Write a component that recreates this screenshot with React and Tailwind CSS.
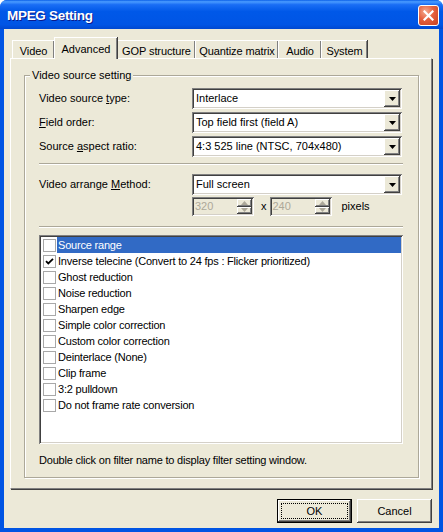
import React from 'react';

const sunken =
  'shadow-[inset_1px_1px_0_#808080,inset_-1px_-1px_0_#ffffff,inset_2px_2px_0_#404040,inset_-2px_-2px_0_#d4d0c8]';
const raised =
  'shadow-[inset_-1px_-1px_0_#404040,inset_1px_1px_0_#ffffff,inset_-2px_-2px_0_#808080,inset_2px_2px_0_#ece9d8]';

const tabs = [
  { name: 'Video', w: 'w-[42px]' },
  { name: 'Advanced', w: 'w-[63px]', active: true },
  { name: 'GOP structure', w: 'w-[78px]' },
  { name: 'Quantize matrix', w: 'w-[83px]' },
  { name: 'Audio', w: 'w-[43px]' },
  { name: 'System', w: 'w-[46px]' },
];

const filters = [
  { label: 'Source range', selected: true },
  { label: 'Inverse telecine (Convert to 24 fps : Flicker prioritized)', checked: true },
  { label: 'Ghost reduction' },
  { label: 'Noise reduction' },
  { label: 'Sharpen edge' },
  { label: 'Simple color correction' },
  { label: 'Custom color correction' },
  { label: 'Deinterlace (None)' },
  { label: 'Clip frame' },
  { label: '3:2 pulldown' },
  { label: 'Do not frame rate conversion' },
];

function Combo({ value }) {
  return (
    <div className={`flex h-[21px] w-[210px] items-center bg-white p-[2px] ${sunken}`}>
      <span className="flex-1 truncate pl-[2px] leading-[17px]">{value}</span>
      <span className={`flex h-[17px] w-[16px] items-center justify-center bg-[#ece9d8] ${raised}`}>
        <svg width="7" height="4" viewBox="0 0 7 4">
          <path d="M0 0h7L3.5 4z" fill="#000" />
        </svg>
      </span>
    </div>
  );
}

function Spin({ value }) {
  return (
    <div className={`flex h-[19px] w-[62px] items-center bg-[#ece9d8] p-[2px] ${sunken}`}>
      <span className="flex-1 pl-[1px] leading-[15px] text-[#aca899]">{value}</span>
      <span className="flex h-[15px] w-[15px] flex-col">
        {['M0 4L3.5 0 7 4z', 'M0 0h7L3.5 4z'].map((d) => (
          <span key={d} className={`flex flex-1 items-center justify-center bg-[#ece9d8] ${raised}`}>
            <svg width="7" height="4" viewBox="0 0 7 4">
              <path d={d} fill="#aca899" />
            </svg>
          </span>
        ))}
      </span>
    </div>
  );
}

function Row({ label, children }) {
  return (
    <div className="flex h-[21px] items-center">
      <span className="w-[153px]">{label}</span>
      {children}
    </div>
  );
}

function Separator({ className }) {
  return <div className={`h-[2px] border-t border-b border-t-[#aca899] border-b-white ${className}`} />;
}

export default function App() {
  return (
    <div className="flex h-[532px] w-[443px] flex-col overflow-hidden rounded-t-[7px] bg-[#0054e3] font-['Liberation_Sans',Arial,sans-serif] text-[11px] text-black">
      {/* title bar */}
      <div className="flex h-[29px] items-start bg-[linear-gradient(to_bottom,#0a5fe8_0%,#4a9bff_6%,#1a6ef5_16%,#0058e8_40%,#0055e5_85%,#0048d0_100%)] pl-[7px] pr-[4px]">
        <span className="mt-[7px] flex-1 text-[13.5px] font-bold leading-[17px] tracking-[-0.3px] text-white [text-shadow:1px_1px_0_#0a1a8c]">
          MPEG Setting
        </span>
        <span className="mt-[5px] flex h-[21px] w-[21px] items-center justify-center rounded-[3px] border border-white bg-[radial-gradient(circle_at_35%_30%,#f5ab90_0%,#e5603e_45%,#c9401f_100%)]">
          <svg width="11" height="11" viewBox="0 0 11 11">
            <path d="M1.5 1.5l8 8M9.5 1.5l-8 8" stroke="#fff" strokeWidth="2.2" strokeLinecap="square" />
          </svg>
        </span>
      </div>

      {/* client area */}
      <div className="mx-[4px] mb-[4px] flex flex-1 flex-col bg-[#ece9d8] pl-[6px] pr-[7px]">
        <div className="mt-[8px] flex h-[21px] items-end pl-[2px]">
          {tabs.map((t) =>
            t.active ? (
              <div
                key={t.name}
                className={`relative z-10 -mb-[1px] flex h-[22px] ${t.w} items-start justify-center border-l border-t border-l-white border-t-white bg-[#ece9d8] pt-[3px] shadow-[inset_-1px_0_0_#808080,1px_0_0_#404040]`}
              >
                {t.name}
              </div>
            ) : (
              <div
                key={t.name}
                className={`flex h-[18px] ${t.w} items-start justify-center border-l border-t border-l-white border-t-white pt-[2px] tracking-[-0.1px] shadow-[inset_-1px_0_0_#808080,1px_0_0_#404040]`}
              >
                {t.name}
              </div>
            )
          )}
        </div>

        {/* tab panel */}
        <div className="h-[431px] w-[422px] border border-b-[#808080] border-l-white border-r-[#808080] border-t-white pl-[13px] pr-[12px] pt-[16px] shadow-[1px_1px_0_#404040]">
          <div className="relative h-[403px] border border-[#aca899] pl-[14px] pr-[15px] pt-[12px] shadow-[1px_1px_0_#fff,inset_1px_1px_0_#fff]">
            <span className="absolute -top-[8px] left-[5px] bg-[#ece9d8] px-[2px] leading-[14px]">
              Video source setting
            </span>

            <div className="flex flex-col gap-[3px]">
              <Row label={<>Video source <u>t</u>ype:</>}>
                <Combo value="Interlace" />
              </Row>
              <Row label={<><u>F</u>ield order:</>}>
                <Combo value="Top field first (field A)" />
              </Row>
              <Row label={<>Source <u>a</u>spect ratio:</>}>
                <Combo value="4:3 525 line (NTSC, 704x480)" />
              </Row>
            </div>

            <Separator className="mt-[6px]" />

            <div className="mt-[9px]">
              <Row label={<>Video arrange <u>M</u>ethod:</>}>
                <Combo value="Full screen" />
              </Row>
            </div>

            <div className="mt-[2px] flex h-[19px] items-center pl-[153px]">
              <Spin value="320" />
              <span className="ml-[7px] mr-[3px] text-black">x</span>
              <Spin value="240" />
              <span className="ml-[10px]">pixels</span>
            </div>

            <Separator className="mt-[10px]" />

            <div className={`mt-[7px] h-[209px] bg-white p-[2px] tracking-[-0.2px] ${sunken}`}>
              {filters.map((f) => (
                <div key={f.label} className="flex h-[16px] items-center pl-[2px]">
                  <span className="flex h-[13px] w-[13px] shrink-0 items-center justify-center border border-[#a8a8a8] bg-white">
                    {f.checked && (
                      <svg width="9" height="9" viewBox="0 0 9 9">
                        <path d="M1 4.2l2.3 2.3L8 1.8" stroke="#000" strokeWidth="1.8" fill="none" />
                      </svg>
                    )}
                  </span>
                  <span
                    className={`ml-[1px] flex h-[16px] flex-1 items-center pl-[1px] ${
                      f.selected ? 'bg-[#316ac5] text-white' : ''
                    }`}
                  >
                    {f.label}
                  </span>
                </div>
              ))}
            </div>

            <p className="mt-[10px] leading-[13px] tracking-[-0.2px]">
              Double click on filter name to display filter setting window.
            </p>
          </div>
        </div>

        {/* buttons */}
        <div className="mt-[10px] flex justify-end gap-[5px]">
          <button className={`relative h-[24px] w-[75px] border border-black bg-[#ece9d8] ${raised}`}>
            <span className="absolute inset-[3px] border border-dotted border-black" />
            OK
          </button>
          <button className={`h-[24px] w-[75px] bg-[#ece9d8] ${raised}`}>Cancel</button>
        </div>
      </div>
    </div>
  );
}
